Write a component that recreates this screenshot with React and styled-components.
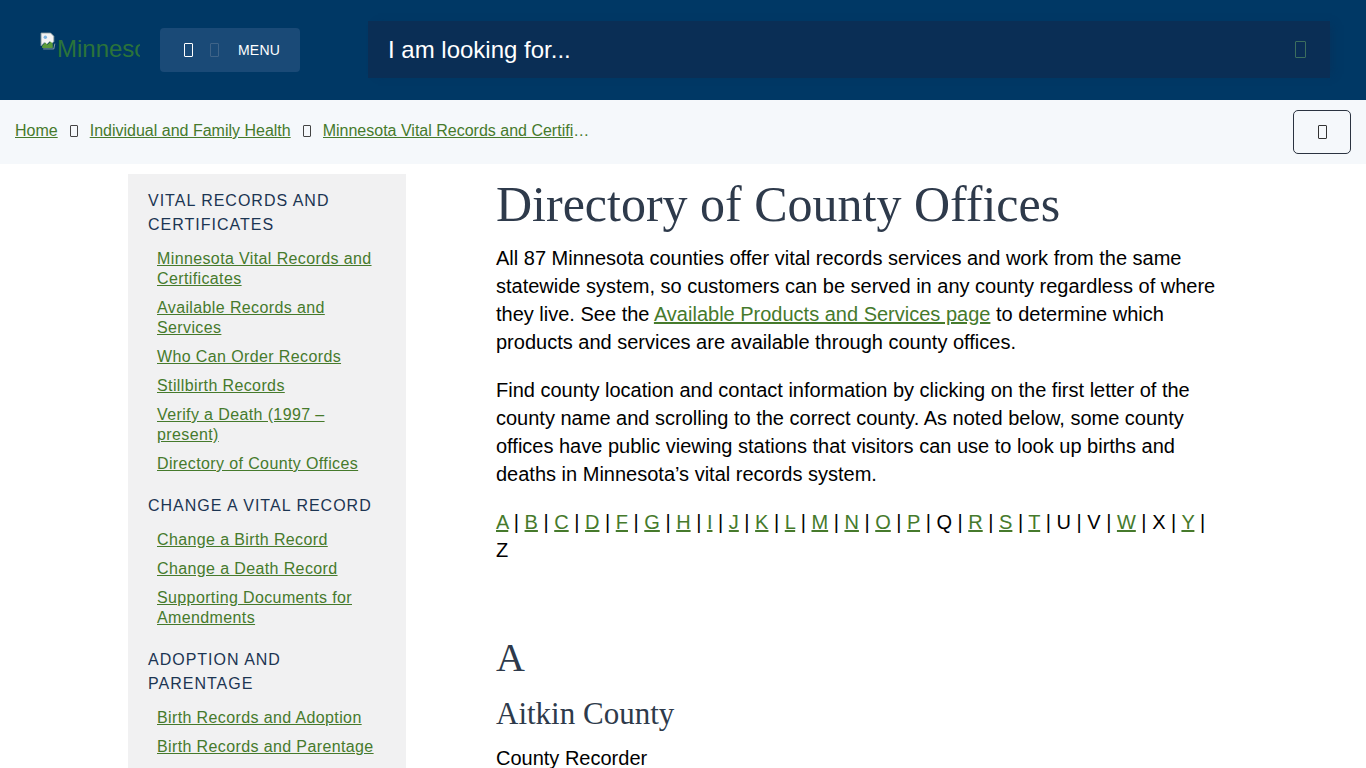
import React from "react";
import styled, { createGlobalStyle } from "styled-components";

const Global = createGlobalStyle`
  html, body { margin: 0; padding: 0; background: #fff; }
  body { font-family: "Liberation Sans", Arial, sans-serif; color: #000; overflow: hidden; }
  * { box-sizing: border-box; }
`;

const GREEN = "#467a2c";

const Header = styled.header`
  height: 100px;
  background: #003865;
  display: flex;
  align-items: center;
  padding: 0 36px 0 40px;
`;

const Logo = styled.a`
  width: 100px;
  height: 34px;
  overflow: hidden;
  white-space: nowrap;
  display: flex;
  align-items: center;
  color: #2b733a;
  font-size: 24px;
  text-decoration: none;
  margin-top: -2px;
`;

const MenuButton = styled.button`
  margin-left: 20px;
  width: 140px;
  height: 44px;
  border: none;
  border-radius: 4px;
  background: #1a4a77;
  color: #fff;
  display: flex;
  align-items: center;
  padding: 0 0 0 24px;
  font-family: "Liberation Sans", Arial, sans-serif;
  font-size: 14px;
`;

const Tofu = styled.span`
  display: inline-block;
  width: ${(p) => p.$w || 9}px;
  height: ${(p) => p.$h || 13}px;
  border: 1px solid ${(p) => p.$c || "currentColor"};
  border-radius: 1px;
  flex: none;
`;

const MenuLabel = styled.span`
  margin-left: 19px;
  letter-spacing: 0.2px;
`;

const Search = styled.div`
  margin-left: 68px;
  flex: 1;
  height: 57px;
  margin-top: -1px;
  background: #0a2e55;
  display: flex;
  align-items: center;
  padding: 0 24px 0 20px;
  color: #fff;
  font-size: 24px;
  box-shadow: 6px 0 8px -4px rgba(10, 46, 85, 0.5);
`;

const SearchText = styled.span`
  flex: 1;
`;

const Crumbs = styled.nav`
  height: 64px;
  background: #f5f8fb;
  display: flex;
  align-items: center;
  padding: 0 15px;
  font-size: 16px;
`;

const Trail = styled.div`
  display: flex;
  align-items: center;
  margin-top: -2px;
`;

const CrumbLink = styled.a`
  color: ${GREEN};
  text-decoration: underline;
  white-space: nowrap;
  ${(p) =>
    p.$truncate &&
    `
    max-width: 270px;
    overflow: hidden;
    text-overflow: ellipsis;
    display: inline-block;
  `}
`;

const Sep = styled.span`
  display: inline-flex;
  color: #444;
  margin: 0 12px;
`;

const ShareButton = styled.button`
  margin-left: auto;
  width: 58px;
  height: 44px;
  border: 1px solid #2b3340;
  border-radius: 5px;
  background: transparent;
  display: flex;
  align-items: center;
  justify-content: center;
  color: #333;
`;

const Body = styled.div`
  display: flex;
  align-items: flex-start;
  padding-top: 10px;
`;

const Sidebar = styled.aside`
  margin-left: 128px;
  width: 278px;
  background: #f1f1f2;
  padding: 15px 20px 40px 20px;
  min-height: 700px;
`;

const SideHeading = styled.h2`
  margin: 0;
  font-family: "Liberation Sans", Arial, sans-serif;
  font-weight: normal;
  font-size: 16px;
  line-height: 24px;
  letter-spacing: 1px;
  text-transform: uppercase;
  color: #1c3552;
  & + ul { margin-top: 12px; }
`;

const SideList = styled.ul`
  list-style: none;
  margin: 0 0 20px 0;
  padding: 0 0 0 9px;
  display: flex;
  flex-direction: column;
  gap: 9px;
`;

const SideLink = styled.a`
  color: ${GREEN};
  font-size: 16px;
  line-height: 20px;
  letter-spacing: 0.38px;
  text-decoration: underline;
  display: block;
`;

const Main = styled.main`
  margin-left: 90px;
  width: 722px;
`;

const H1 = styled.h1`
  margin: 2px 0 12px;
  font-family: "Liberation Serif", "Times New Roman", serif;
  font-weight: normal;
  font-size: 50px;
  line-height: 56px;
  color: #2e3a4b;
`;

const P = styled.p`
  margin: 0 0 20px;
  font-size: 20px;
  line-height: 28px;
`;

const Inline = styled.a`
  color: ${GREEN};
  text-decoration: underline;
`;

const H2 = styled.h2`
  margin: ${(p) => p.$mt}px 0 0;
  font-family: "Liberation Serif", "Times New Roman", serif;
  font-weight: normal;
  font-size: ${(p) => p.$size}px;
  line-height: ${(p) => p.$lh}px;
  color: #2e3a4b;
`;

const Sub = styled.p`
  margin: 12px 0 0;
  font-size: 20px;
  line-height: 28px;
`;

function BrokenImage() {
  return (
    <svg width="17" height="18" viewBox="0 0 16 17" style={{ flex: "none", alignSelf: "flex-start", marginRight: 0 }}>
      <path d="M1 1h9l3 3v5l-2 2-2-2-3 3-2-2-3 3z" fill="#f4f4f4" stroke="#9aa" strokeWidth="0.8" />
      <path d="M2 13l3-3 2 2 3-3 2 2v4H2z" fill="#5a9a3a" />
      <circle cx="5" cy="5" r="1.6" fill="#7cb4e0" />
      <path d="M3 16h10l1-5" fill="none" stroke="#9aa" strokeWidth="0.8" />
    </svg>
  );
}

const letters = "ABCDEFGHIJKLMNOPQRSTUVWXYZ".split("").filter((l) => l !== "E");
const unlinked = new Set(["Q", "U", "V", "X", "Z"]);

export default function App() {
  return (
    <>
      <Global />
      <Header>
        <Logo href="#">
          <BrokenImage />
          <span>Minnesota Department of Health</span>
        </Logo>
        <MenuButton>
          <Tofu $w={9} $h={14} $c="#ffffff" />
          <Tofu $w={9} $h={14} $c="#3f6488" style={{ marginLeft: 17 }} />
          <MenuLabel>MENU</MenuLabel>
        </MenuButton>
        <Search>
          <SearchText>I am looking for...</SearchText>
          <Tofu $w={11} $h={17} $c="#3c6e5e" />
        </Search>
      </Header>

      <Crumbs>
        <Trail>
          <CrumbLink href="#">Home</CrumbLink>
          <Sep><Tofu $w={8} $h={12} /></Sep>
          <CrumbLink href="#">Individual and Family Health</CrumbLink>
          <Sep><Tofu $w={8} $h={12} /></Sep>
          <CrumbLink href="#" $truncate>Minnesota Vital Records and Certificates</CrumbLink>
        </Trail>
        <ShareButton aria-label="share">
          <Tofu $w={9} $h={14} />
        </ShareButton>
      </Crumbs>

      <Body>
        <Sidebar>
          <SideHeading>Vital Records and Certificates</SideHeading>
          <SideList>
            <li><SideLink href="#">Minnesota Vital Records and Certificates</SideLink></li>
            <li><SideLink href="#">Available Records and Services</SideLink></li>
            <li><SideLink href="#">Who Can Order Records</SideLink></li>
            <li><SideLink href="#">Stillbirth Records</SideLink></li>
            <li><SideLink href="#">Verify a Death (1997 – present)</SideLink></li>
            <li><SideLink href="#">Directory of County Offices</SideLink></li>
          </SideList>
          <SideHeading>Change a Vital Record</SideHeading>
          <SideList>
            <li><SideLink href="#">Change a Birth Record</SideLink></li>
            <li><SideLink href="#">Change a Death Record</SideLink></li>
            <li><SideLink href="#">Supporting Documents for Amendments</SideLink></li>
          </SideList>
          <SideHeading>Adoption and Parentage</SideHeading>
          <SideList>
            <li><SideLink href="#">Birth Records and Adoption</SideLink></li>
            <li><SideLink href="#">Birth Records and Parentage</SideLink></li>
          </SideList>
        </Sidebar>

        <Main>
          <H1>Directory of County Offices</H1>
          <P>
            All 87 Minnesota counties offer vital records services and work from the same
            statewide system, so customers can be served in any county regardless of where
            they live. See the <Inline href="#">Available Products and Services page</Inline> to
            determine which products and services are available through county offices.
          </P>
          <P>
            Find county location and contact information by clicking on the first letter of the
            county name and scrolling to the correct county. As noted below, some county offices
            have public viewing stations that visitors can use to look up births and deaths in
            Minnesota’s vital records system.
          </P>
          <P>
            {letters.map((l, i) => (
              <React.Fragment key={l}>
                {unlinked.has(l) ? l : <Inline href="#">{l}</Inline>}
                {i < letters.length - 1 ? " | " : ""}
              </React.Fragment>
            ))}
          </P>
          <H2 $size={40} $lh={46} $mt={71}>A</H2>
          <H2 $size={31} $lh={36} $mt={15}>Aitkin County</H2>
          <Sub>County Recorder</Sub>
        </Main>
      </Body>
    </>
  );
}
